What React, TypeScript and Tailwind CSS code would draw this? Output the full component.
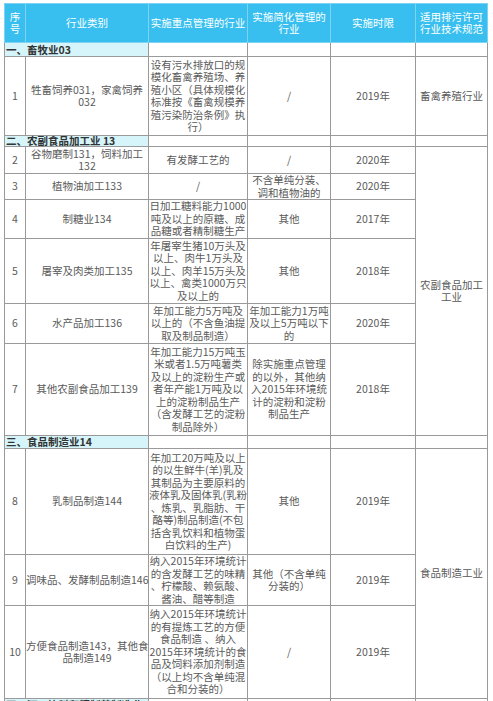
import React from "react";

type Row = {
  no: string;
  category: string[];
  key: string[];
  simple: string[];
  year: string;
  h: string;
};

type Section = {
  title: string;
  h: string;
  spec: string;
  rows: Row[];
};

const sections: Section[] = [
  {
    title: "一、畜牧业03",
    h: "h-[14px]",
    spec: "畜禽养殖行业",
    rows: [
      {
        no: "1",
        category: ["牲畜饲养031，家禽饲养", "032"],
        key: ["设有污水排放口的规", "模化畜禽养殖场、养", "殖小区（具体规模化", "标准按《畜禽规模养", "殖污染防治条例》执", "行）"],
        simple: ["/"],
        year: "2019年",
        h: "h-[79px]",
      },
    ],
  },
  {
    title: "二、农副食品加工业 13",
    h: "h-[11px]",
    spec: "农副食品加工\n工业",
    rows: [
      {
        no: "2",
        category: ["谷物磨制131，饲料加工", "132"],
        key: ["有发酵工艺的"],
        simple: ["/"],
        year: "2020年",
        h: "h-[27px]",
      },
      {
        no: "3",
        category: ["植物油加工133"],
        key: ["/"],
        simple: ["不含单纯分装、", "调和植物油的"],
        year: "2020年",
        h: "h-[26px]",
      },
      {
        no: "4",
        category: ["制糖业134"],
        key: ["日加工糖料能力1000", "吨及以上的原糖、成", "品糖或者精制糖生产"],
        simple: ["其他"],
        year: "2017年",
        h: "h-[39px]",
      },
      {
        no: "5",
        category: ["屠宰及肉类加工135"],
        key: ["年屠宰生猪10万头及", "以上、肉牛1万头及", "以上、肉羊15万头及", "以上、禽类1000万只", "及以上的"],
        simple: ["其他"],
        year: "2018年",
        h: "h-[65px]",
      },
      {
        no: "6",
        category: ["水产品加工136"],
        key: ["年加工能力5万吨及", "以上的（不含鱼油提", "取及制品制造）"],
        simple: ["年加工能力1万吨", "及以上5万吨以下", "的"],
        year: "2020年",
        h: "h-[40px]",
      },
      {
        no: "7",
        category: ["其他农副食品加工139"],
        key: ["年加工能力15万吨玉", "米或者1.5万吨薯类", "及以上的淀粉生产或", "者年产能1万吨及以", "上的淀粉制品生产", "（含发酵工艺的淀粉", "制品除外）"],
        simple: ["除实施重点管理", "的以外，其他纳", "入2015年环境统", "计的淀粉和淀粉", "制品生产"],
        year: "2018年",
        h: "h-[92px]",
      },
    ],
  },
  {
    title: "三、食品制造业14",
    h: "h-[13px]",
    spec: "食品制造工业",
    rows: [
      {
        no: "8",
        category: ["乳制品制造144"],
        key: ["年加工20万吨及以上", "的以生鲜牛(羊)乳及", "其制品为主要原料的", "液体乳及固体乳(乳粉", "、炼乳、乳脂肪、干", "酪等)制品制造(不包", "括含乳饮料和植物蛋", "白饮料的生产)"],
        simple: ["其他"],
        year: "2019年",
        h: "h-[106px]",
      },
      {
        no: "9",
        category: ["调味品、发酵制品制造146"],
        key: ["纳入2015年环境统计", "的含发酵工艺的味精", "、柠檬酸、赖氨酸、", "酱油、醋等制造"],
        simple: ["其他（不含单纯", "分装的）"],
        year: "2019年",
        h: "h-[50px]",
      },
      {
        no: "10",
        category: ["方便食品制造143，其他食", "品制造149"],
        key: ["纳入2015年环境统计", "的有提炼工艺的方便", "食品制造 、纳入", "2015年环境统计的食", "品及饲料添加剂制造", "（以上均不含单纯混", "合和分装的）"],
        simple: ["/"],
        year: "2019年",
        h: "h-[93px]",
      },
    ],
  },
  {
    title: "四、酒、饮料和精制茶制造业15",
    h: "h-[13px]",
    spec: "",
    rows: [],
  },
];

function Lines({ lines }: { lines: string[] }) {
  return (
    <>
      {lines.map((l, i) => (
        <div key={i} className="whitespace-nowrap">
          {l}
        </div>
      ))}
    </>
  );
}

const cell = "border border-[#9a9a9a] px-0 py-0 text-center align-middle";

export default function App() {
  return (
    <div className="min-h-screen bg-white pl-[4px] pt-[3px] font-['Noto_Sans_CJK_SC','Noto_Sans',sans-serif] text-[10.5px] leading-[12.5px] text-[#5a5a5a]">
      <table className="w-[483px] table-fixed border-collapse">
        <colgroup>
          <col className="w-[21px]" />
          <col className="w-[123px]" />
          <col className="w-[99px]" />
          <col className="w-[83px]" />
          <col className="w-[85px]" />
          <col className="w-[72px]" />
        </colgroup>
        <thead>
          <tr className="h-[39px] bg-[#38bff0] text-white">
            <th className="border border-[#7fd3f2] font-normal">
              序<br />号
            </th>
            <th className="border border-[#7fd3f2] font-normal">行业类别</th>
            <th className="border border-[#7fd3f2] font-normal">实施重点管理的行业</th>
            <th className="border border-[#7fd3f2] font-normal">
              实施简化管理的
              <br />
              行业
            </th>
            <th className="border border-[#7fd3f2] font-normal">实施时限</th>
            <th className="border border-[#7fd3f2] font-normal">
              适用排污许可
              <br />
              行业技术规范
            </th>
          </tr>
        </thead>
        <tbody>
          {sections.map((s) => (
            <React.Fragment key={s.title}>
              <tr className={s.h}>
                <td
                  colSpan={2}
                  className="whitespace-nowrap border border-[#9a9a9a] bg-[#d5f5fb] pl-[1px] text-left align-middle font-bold leading-[10px] text-[#333]"
                >
                  {s.title}
                </td>
                <td className={cell}></td>
                <td className={cell}></td>
                <td className={cell}></td>
                <td className={cell}></td>
              </tr>
              {s.rows.map((r, i) => (
                <tr key={r.no} className={r.h}>
                  <td className={cell}>{r.no}</td>
                  <td className={cell}>
                    <Lines lines={r.category} />
                  </td>
                  <td className={cell}>
                    <Lines lines={r.key} />
                  </td>
                  <td className={cell}>
                    <Lines lines={r.simple} />
                  </td>
                  <td className={cell}>{r.year}</td>
                  {i === 0 && (
                    <td rowSpan={s.rows.length} className={cell}>
                      <Lines lines={s.spec.split("\n")} />
                    </td>
                  )}
                </tr>
              ))}
            </React.Fragment>
          ))}
        </tbody>
      </table>
    </div>
  );
}
